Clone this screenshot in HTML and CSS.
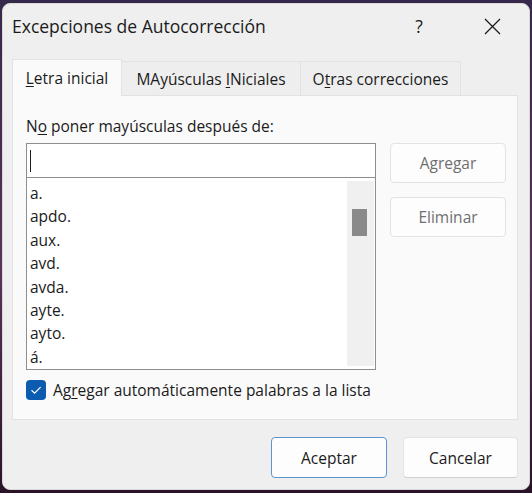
FILE: index.html
```html
<!DOCTYPE html>
<html lang="es">
<head>
<meta charset="utf-8">
<title>Excepciones de Autocorrección</title>
<link rel="stylesheet" href="styles.css">
</head>
<body>
<div class="window">
  <div class="titlebar">
    <span class="title">Excepciones de Autocorrección</span>
    <span class="help">?</span>
    <span class="close">
      <svg width="17" height="17" viewBox="0 0 17 17"><path d="M1 1 L16 16 M16 1 L1 16" stroke="#1b1b1b" stroke-width="1.3" fill="none"/></svg>
    </span>
  </div>
  <div class="content">
    <div class="tabs">
      <div class="tab active tab1"><span><u>L</u>etra inicial</span></div>
      <div class="tab tab2"><span>MAyúsculas <u>I</u>Niciales</span></div>
      <div class="tab tab3"><span>O<u>t</u>ras correcciones</span></div>
    </div>
    <div class="panel">
      <div class="label">N<u>o</u> poner mayúsculas después de:</div>
      <div class="row">
        <div class="leftcol">
          <div class="input"><span class="caret"></span></div>
          <div class="list">
            <div class="items">
              <div>a.</div>
              <div>apdo.</div>
              <div>aux.</div>
              <div>avd.</div>
              <div>avda.</div>
              <div>ayte.</div>
              <div>ayto.</div>
              <div>á.</div>
            </div>
            <div class="track"><div class="thumb"></div></div>
          </div>
        </div>
        <div class="rightcol">
          <div class="btn disabled">Agregar</div>
          <div class="btn disabled">Eliminar</div>
        </div>
      </div>
      <div class="check">
        <span class="box"><svg width="20" height="20" viewBox="0 0 20 20"><path d="M5.5 10.2 L8.6 13.2 L14.6 7.2" stroke="#ffffff" stroke-width="1.2" fill="none"/></svg></span>
        <span class="checklabel">Ag<u>r</u>egar automáticamente palabras a la lista</span>
      </div>
    </div>
    <div class="footer">
      <div class="btn default">Aceptar</div>
      <div class="btn">Cancelar</div>
    </div>
  </div>
</div>
</body>
</html>
```

FILE: styles.css
```css
html, body {
  margin: 0;
  padding: 0;
}
body {
  width: 532px;
  height: 493px;
  overflow: hidden;
  background: linear-gradient(180deg, #35284a 0%, #5a3258 55%, #2a1328 100%);
  font-family: "Open Sans", "Noto Sans", sans-serif;
  color: #1b1b1b;
}
.window {
  box-sizing: border-box;
  margin: 3px 0 0 2px;
  width: 528px;
  height: 487px;
  border-radius: 8px;
  background: #efefef;
  border: 1px solid #d9d9d9;
  display: flex;
  flex-direction: column;
}
.titlebar {
  height: 44px;
  display: flex;
  align-items: center;
  padding-left: 9px;
}
.title {
  font-size: 17.5px;
  flex: 1;
}
.help {
  font-size: 17.5px;
  width: 20px;
  text-align: center;
  margin-right: 55px;
}
.close {
  width: 17px;
  height: 17px;
  display: flex;
  margin-right: 28px;
}
.content {
  padding: 11px 11px 0 9px;
  display: flex;
  flex-direction: column;
}
.tabs {
  display: flex;
  align-items: flex-end;
  height: 36px;
  font-size: 15.5px;
}
.tab {
  box-sizing: border-box;
  height: 34px;
  display: flex;
  align-items: center;
  justify-content: center;
  border: 1px solid #e2e2e2;
  border-bottom: none;
  border-left: none;
  background: #eeeeee;
  white-space: nowrap;
}
.tab.active {
  height: 37px;
  margin-bottom: -1px;
  background: #fafafa;
  border-left: 1px solid #e2e2e2;
  position: relative;
  z-index: 1;
}
.tab1 { width: 110px; }
.tab2 { width: 179px; }
.tab3 { width: 160px; }
.panel {
  box-sizing: border-box;
  height: 325px;
  background: #fafafa;
  border: 1px solid #e2e2e2;
  padding: 20px 0 0 13px;
  font-size: 15.5px;
}
.label {
  line-height: 21px;
  height: 21px;
}
.row {
  display: flex;
  gap: 14px;
  margin-top: 6px;
}
.leftcol {
  width: 350px;
}
.input {
  box-sizing: border-box;
  height: 35px;
  border: 1px solid #8e8e8e;
  background: #ffffff;
  display: flex;
  align-items: center;
  padding-left: 3px;
}
.caret {
  width: 1px;
  height: 22px;
  background: #1b1b1b;
}
.list {
  box-sizing: border-box;
  height: 192px;
  border: 1px solid #8e8e8e;
  border-top: none;
  background: #ffffff;
  display: flex;
}
.items {
  flex: 1;
  padding: 4px 0 0 3px;
  line-height: 23.4px;
  overflow: hidden;
}
.track {
  width: 27px;
  margin: 3px 1px 3px 0;
  background: #f0f0f0;
}
.thumb {
  width: 15px;
  height: 27px;
  margin: 28px 0 0 5px;
  background: #8a8a8a;
}
.rightcol {
  display: flex;
  flex-direction: column;
  gap: 14px;
}
.btn {
  box-sizing: border-box;
  width: 116px;
  height: 40px;
  display: flex;
  align-items: center;
  justify-content: center;
  background: #fdfdfd;
  border: 1px solid #e3e3e3;
  border-bottom-color: #cfcfcf;
  border-radius: 4px;
  font-size: 15.5px;
  color: #1b1b1b;
}
.btn.disabled {
  color: #6f6f6f;
  border-bottom-color: #e3e3e3;
}
.check {
  display: flex;
  align-items: center;
  margin-top: 10px;
  height: 20px;
}
.box {
  width: 20px;
  height: 20px;
  border-radius: 4px;
  background: #0b5cb0;
  display: flex;
  margin-right: 7px;
}
.footer {
  display: flex;
  justify-content: flex-end;
  gap: 16px;
  padding-top: 17px;
}
.footer .btn {
  height: 41px;
}
.footer .btn + .btn {
  width: 115px;
}
.btn.default {
  border: 1px solid #5b94d1;
}
u {
  text-decoration-thickness: 1px;
  text-underline-offset: 2px;
}
```
